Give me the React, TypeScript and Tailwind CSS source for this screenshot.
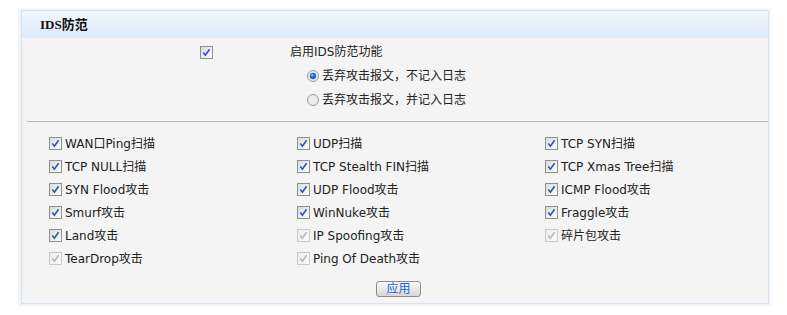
import React from "react";

interface Item {
  label: string;
  disabled?: boolean;
}

// Attack options, row by row (three per row)
const items: Item[] = [
  { label: "WAN口Ping扫描" },
  { label: "UDP扫描" },
  { label: "TCP SYN扫描" },
  { label: "TCP NULL扫描" },
  { label: "TCP Stealth FIN扫描" },
  { label: "TCP Xmas Tree扫描" },
  { label: "SYN Flood攻击" },
  { label: "UDP Flood攻击" },
  { label: "ICMP Flood攻击" },
  { label: "Smurf攻击" },
  { label: "WinNuke攻击" },
  { label: "Fraggle攻击" },
  { label: "Land攻击" },
  { label: "IP Spoofing攻击", disabled: true },
  { label: "碎片包攻击", disabled: true },
  { label: "TearDrop攻击", disabled: true },
  { label: "Ping Of Death攻击", disabled: true },
];

function CheckBox({ disabled = false }: { disabled?: boolean }) {
  return (
    <svg width="13" height="13" viewBox="0 0 13 13" className="shrink-0">
      <defs>
        <linearGradient id={disabled ? "cbd" : "cb"} x1="0" y1="0" x2="1" y2="1">
          <stop offset="0" stopColor={disabled ? "#eeeeee" : "#d9d9d9"} />
          <stop offset="1" stopColor={disabled ? "#fafafa" : "#ffffff"} />
        </linearGradient>
      </defs>
      <rect
        x="0.5"
        y="0.5"
        width="12"
        height="12"
        fill={`url(#${disabled ? "cbd" : "cb"})`}
        stroke={disabled ? "#c9c9c9" : "#8e8f8f"}
      />
      <path
        d="M3.3 6.4 L5.4 9.2 L9.6 3.2"
        fill="none"
        stroke={disabled ? "#b9b9b9" : "#3155b6"}
        strokeWidth="1.6"
      />
    </svg>
  );
}

function Radio({ checked = false }: { checked?: boolean }) {
  return (
    <svg width="12" height="12" viewBox="0 0 12 12" className="shrink-0">
      <circle cx="6" cy="6" r="5.5" fill="#ececec" stroke="#9b9b9b" />
      {checked && (
        <>
          <circle cx="6" cy="6" r="3.2" fill="#1f6fc9" />
          <circle cx="5.2" cy="5.2" r="1.1" fill="#8fc2f3" />
        </>
      )}
    </svg>
  );
}

function App() {
  return (
    <div
      className="w-[787px] h-[315px] bg-white pt-2 text-[12px] text-[#222]"
      style={{ fontFamily: '"DejaVu Sans", "Noto Sans CJK SC", sans-serif' }}
    >
      <div className="ml-[18px] w-[753px] h-[298px] bg-[#f4f4f4] pt-[2px] pl-[3px] pr-[2px]">
        <div className="h-[294px] border border-[#d3e3f3] flex flex-col">
          {/* Header */}
          <div className="h-[27px] bg-gradient-to-b from-[#f2f7fd] to-[#dbe9f8] border-b border-[#e3edf8] flex items-center pl-[18px] pt-px">
            <span
              className="font-bold text-[13px] text-[#111]"
              style={{ fontFamily: '"Liberation Serif", "Noto Sans CJK SC", serif' }}
            >
              IDS防范
            </span>
          </div>

          {/* Enable + mode */}
          <div className="flex flex-col pt-[2px]">
            <div className="h-6 flex items-center">
              <div className="w-[268px] pl-[178px] flex items-center">
                <CheckBox />
              </div>
              <span>启用IDS防范功能</span>
            </div>
            <div className="h-6 flex items-center pl-[285px] gap-[3px]">
              <Radio checked />
              <span>丢弃攻击报文，不记入日志</span>
            </div>
            <div className="h-6 flex items-center pl-[285px] gap-[3px]">
              <Radio />
              <span>丢弃攻击报文，并记入日志</span>
            </div>
          </div>

          <div className="mt-[9px] ml-[5px] h-px bg-[#b5b5b5]" />

          {/* Attack options */}
          <div className="pt-[10px] pl-[27px] grid grid-cols-[248px_248px_1fr]">
            {items.map((item) => (
              <div key={item.label} className="h-[23px] flex items-center gap-[3px]">
                <CheckBox disabled={item.disabled} />
                <span>{item.label}</span>
              </div>
            ))}
          </div>

          <div className="mt-[11px] flex justify-center pl-[7px]">
            <button className="w-[45px] h-[16px] rounded-[3px] border border-[#8c8c8c] bg-gradient-to-b from-[#fbfbfb] to-[#d6d6d6] text-[12px] leading-none text-[#1a63d8] flex items-center justify-center">
              应用
            </button>
          </div>
        </div>
      </div>
    </div>
  );
}

export default App;
